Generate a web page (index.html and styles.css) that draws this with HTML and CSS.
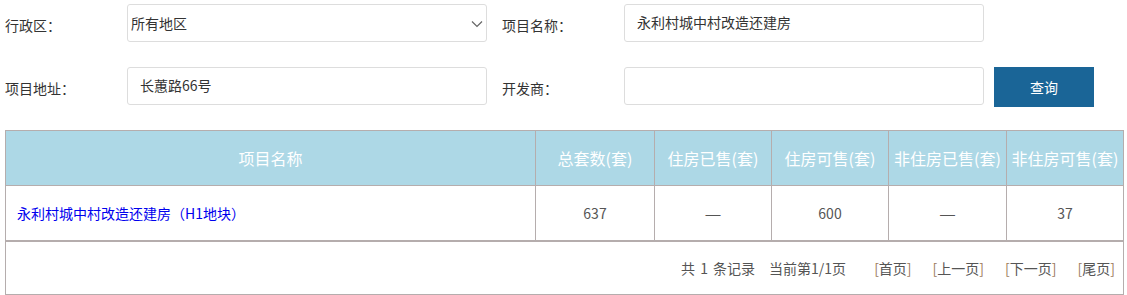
FILE: index.html
```html
<!DOCTYPE html>
<html lang="zh-CN">
<head>
    <meta charset="UTF-8">
    <title>项目查询</title>
    <link rel="stylesheet" href="styles.css">
</head>
<body>
    <div class="search">
        <div class="form-row">
            <label class="field-label">行政区：</label>
            <div class="select-wrap">
                <select class="field-select">
                    <option>所有地区</option>
                </select>
                <svg class="select-arrow" width="12" height="8" viewBox="0 0 12 8">
                    <path d="M1 1.5 L6 6.5 L11 1.5" fill="none" stroke="#666" stroke-width="1.2"/>
                </svg>
            </div>
            <label class="field-label gap-left">项目名称：</label>
            <input class="field-input" type="text" value="永利村城中村改造还建房">
        </div>
        <div class="form-row">
            <label class="field-label">项目地址：</label>
            <input class="field-input" type="text" value="长蕙路66号">
            <label class="field-label gap-left">开发商：</label>
            <input class="field-input" type="text" value="">
            <button class="btn-search">查询</button>
        </div>
    </div>

    <table class="result-table">
        <colgroup>
            <col style="width: 530px">
            <col style="width: 119px">
            <col style="width: 117px">
            <col style="width: 117px">
            <col style="width: 118px">
            <col style="width: 117px">
        </colgroup>
        <thead>
            <tr>
                <th>项目名称</th>
                <th>总套数(套)</th>
                <th>住房已售(套)</th>
                <th>住房可售(套)</th>
                <th>非住房已售(套)</th>
                <th>非住房可售(套)</th>
            </tr>
        </thead>
        <tbody>
            <tr>
                <td class="name-cell"><a href="#">永利村城中村改造还建房（H1地块）</a></td>
                <td>637</td>
                <td class="dash">—</td>
                <td>600</td>
                <td class="dash">—</td>
                <td>37</td>
            </tr>
        </tbody>
    </table>

    <div class="pager">
        <span class="pager-total">共 1 条记录</span>
        <span class="pager-current">当前第1/1页</span>
        <a href="#" class="pager-link"><b>[</b>首页<b>]</b></a>
        <a href="#" class="pager-link"><b>[</b>上一页<b>]</b></a>
        <a href="#" class="pager-link"><b>[</b>下一页<b>]</b></a>
        <a href="#" class="pager-link"><b>[</b>尾页<b>]</b></a>
    </div>
</body>
</html>
```

FILE: styles.css
```css
body {
    font-family: "Noto Sans CJK SC", "Noto Sans", sans-serif;
    font-size: 14px;
    color: #333;
    margin: 0;
    padding: 0;
    background-color: #fff;
}
.search {
    padding: 4px 0 0 5px;
}
.form-row {
    display: flex;
    align-items: flex-start;
    height: 38px;
    margin-bottom: 25px;
}
.field-label {
    width: 122px;
    line-height: 38px;
    padding-top: 2px;
    color: #333;
}
.gap-left {
    margin-left: 15px;
}
.select-wrap {
    position: relative;
    width: 360px;
    height: 38px;
}
.field-select {
    appearance: none;
    -webkit-appearance: none;
    width: 360px;
    height: 38px;
    box-sizing: border-box;
    border: 1px solid #ddd;
    border-radius: 3px;
    background: #fff;
    padding: 0 0 1px 3px;
    font-family: inherit;
    font-size: 14px;
    color: #333;
}
.select-arrow {
    position: absolute;
    right: 4px;
    top: 16px;
}
.field-input {
    width: 360px;
    height: 38px;
    box-sizing: border-box;
    border: 1px solid #ddd;
    border-radius: 3px;
    padding: 0 12px 2px;
    font-family: inherit;
    font-size: 14px;
    color: #333;
}
.btn-search {
    width: 100px;
    height: 40px;
    margin-left: 10px;
    border: none;
    background-color: #1a6597;
    color: #fff;
    font-family: inherit;
    font-size: 14px;
    cursor: pointer;
}
.result-table {
    margin: 23px 0 0 5px;
    border-collapse: collapse;
    table-layout: fixed;
    width: 1119px;
}
.result-table th,
.result-table td {
    border: 1px solid #b5adad;
    height: 54px;
    padding: 0;
    text-align: center;
    white-space: nowrap;
    overflow: hidden;
}
.result-table th {
    background-color: #add8e6;
    color: #fff;
    font-size: 16px;
    font-weight: normal;
}
.result-table td {
    color: #555;
}
.result-table .dash {
    font-family: "Liberation Sans", sans-serif;
    font-size: 15px;
}
.result-table .name-cell {
    text-align: left;
    padding-left: 11px;
}
.name-cell a {
    color: #0000ee;
    text-decoration: none;
}
.pager {
    margin-left: 5px;
    width: 1117px;
    height: 52px;
    border: 1px solid #b5adad;
    display: flex;
    justify-content: flex-end;
    align-items: center;
    color: #555;
}
.pager-total {
    word-spacing: 2px;
    margin-right: 14px;
}
.pager-current {
    margin-right: 28px;
}
.pager-link {
    color: #555;
    text-decoration: none;
    margin-right: 21px;
}
.pager-link:last-child {
    margin-right: 8px;
}
.pager-link b {
    font-weight: normal;
    color: #9c7a5c;
}
```
